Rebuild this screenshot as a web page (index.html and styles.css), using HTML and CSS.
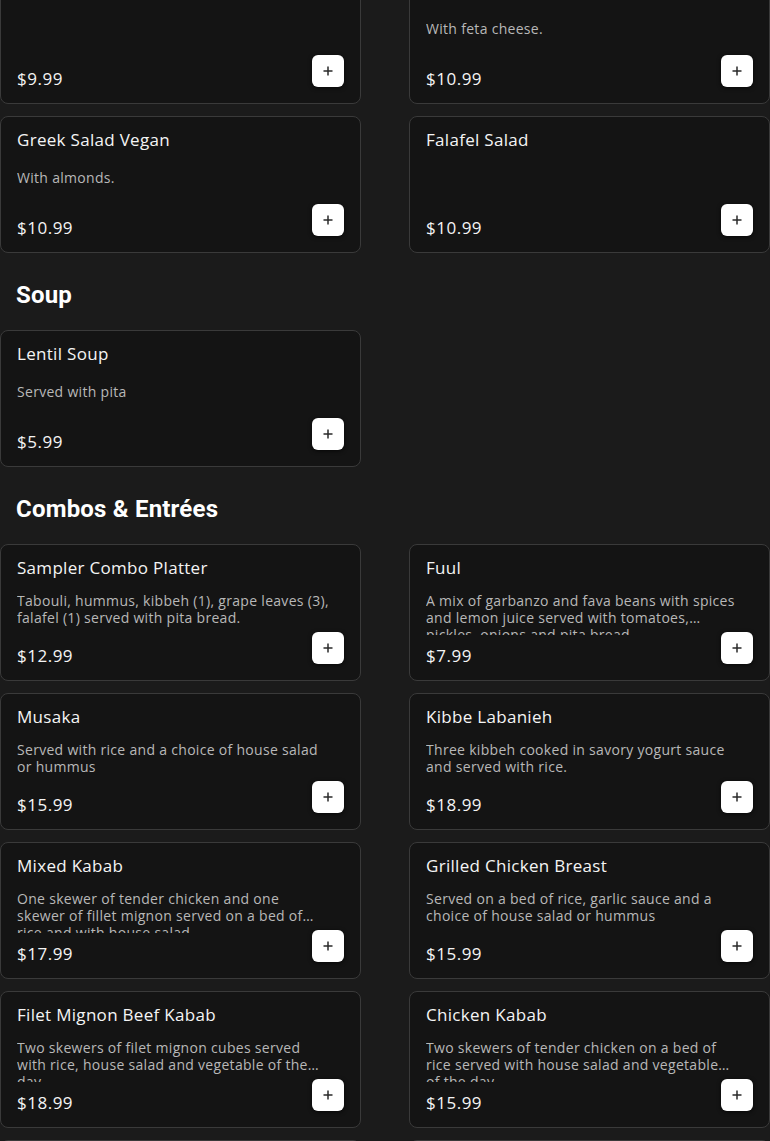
FILE: index.html
```html
<!DOCTYPE html>
<html lang="en">
<head>
<meta charset="utf-8">
<title>Menu</title>
<link rel="stylesheet" href="styles.css">
</head>
<body>
<main class="menu">
  <section class="section section--scrolled">
    <div class="grid">
      <article class="card">
        <h3 class="card-title">House Salad</h3>
        <div class="card-desc"></div>
        <div class="card-foot">
          <span class="card-price">$9.99</span>
          <button class="add-btn" type="button" aria-label="Add"><svg viewBox="0 0 12 12" width="12" height="12"><path d="M6 1.5v9M1.5 6h9"/></svg></button>
        </div>
      </article>
      <article class="card">
        <h3 class="card-title">Greek Salad</h3>
        <p class="card-desc card-desc--short">With feta cheese.</p>
        <div class="card-foot">
          <span class="card-price">$10.99</span>
          <button class="add-btn" type="button" aria-label="Add"><svg viewBox="0 0 12 12" width="12" height="12"><path d="M6 1.5v9M1.5 6h9"/></svg></button>
        </div>
      </article>
      <article class="card">
        <h3 class="card-title">Greek Salad Vegan</h3>
        <p class="card-desc card-desc--short">With almonds.</p>
        <div class="card-foot">
          <span class="card-price">$10.99</span>
          <button class="add-btn" type="button" aria-label="Add"><svg viewBox="0 0 12 12" width="12" height="12"><path d="M6 1.5v9M1.5 6h9"/></svg></button>
        </div>
      </article>
      <article class="card">
        <h3 class="card-title">Falafel Salad</h3>
        <div class="card-desc"></div>
        <div class="card-foot">
          <span class="card-price">$10.99</span>
          <button class="add-btn" type="button" aria-label="Add"><svg viewBox="0 0 12 12" width="12" height="12"><path d="M6 1.5v9M1.5 6h9"/></svg></button>
        </div>
      </article>
    </div>
  </section>

  <section class="section">
    <h2 class="section-title">Soup</h2>
    <div class="grid">
      <article class="card">
        <h3 class="card-title">Lentil Soup</h3>
        <p class="card-desc card-desc--short">Served with pita</p>
        <div class="card-foot">
          <span class="card-price">$5.99</span>
          <button class="add-btn" type="button" aria-label="Add"><svg viewBox="0 0 12 12" width="12" height="12"><path d="M6 1.5v9M1.5 6h9"/></svg></button>
        </div>
      </article>
    </div>
  </section>

  <section class="section">
    <h2 class="section-title">Combos &amp; Entrées</h2>
    <div class="grid">
      <article class="card">
        <h3 class="card-title">Sampler Combo Platter</h3>
        <p class="card-desc">Tabouli, hummus, kibbeh (1), grape leaves (3),<br>falafel (1) served with pita bread.</p>
        <div class="card-foot">
          <span class="card-price">$12.99</span>
          <button class="add-btn" type="button" aria-label="Add"><svg viewBox="0 0 12 12" width="12" height="12"><path d="M6 1.5v9M1.5 6h9"/></svg></button>
        </div>
      </article>
      <article class="card">
        <h3 class="card-title">Fuul</h3>
        <p class="card-desc">A mix of garbanzo and fava beans with spices<br>and lemon juice served with tomatoes,<br>pickles, onions and pita bread.</p>
        <div class="card-foot">
          <span class="card-price">$7.99</span>
          <button class="add-btn" type="button" aria-label="Add"><svg viewBox="0 0 12 12" width="12" height="12"><path d="M6 1.5v9M1.5 6h9"/></svg></button>
        </div>
      </article>
      <article class="card">
        <h3 class="card-title">Musaka</h3>
        <p class="card-desc">Served with rice and a choice of house salad<br>or hummus</p>
        <div class="card-foot">
          <span class="card-price">$15.99</span>
          <button class="add-btn" type="button" aria-label="Add"><svg viewBox="0 0 12 12" width="12" height="12"><path d="M6 1.5v9M1.5 6h9"/></svg></button>
        </div>
      </article>
      <article class="card">
        <h3 class="card-title">Kibbe Labanieh</h3>
        <p class="card-desc">Three kibbeh cooked in savory yogurt sauce<br>and served with rice.</p>
        <div class="card-foot">
          <span class="card-price">$18.99</span>
          <button class="add-btn" type="button" aria-label="Add"><svg viewBox="0 0 12 12" width="12" height="12"><path d="M6 1.5v9M1.5 6h9"/></svg></button>
        </div>
      </article>
      <article class="card">
        <h3 class="card-title">Mixed Kabab</h3>
        <p class="card-desc">One skewer of tender chicken and one<br>skewer of fillet mignon served on a bed of<br>rice and with house salad</p>
        <div class="card-foot">
          <span class="card-price">$17.99</span>
          <button class="add-btn" type="button" aria-label="Add"><svg viewBox="0 0 12 12" width="12" height="12"><path d="M6 1.5v9M1.5 6h9"/></svg></button>
        </div>
      </article>
      <article class="card">
        <h3 class="card-title">Grilled Chicken Breast</h3>
        <p class="card-desc">Served on a bed of rice, garlic sauce and a<br>choice of house salad or hummus</p>
        <div class="card-foot">
          <span class="card-price">$15.99</span>
          <button class="add-btn" type="button" aria-label="Add"><svg viewBox="0 0 12 12" width="12" height="12"><path d="M6 1.5v9M1.5 6h9"/></svg></button>
        </div>
      </article>
      <article class="card">
        <h3 class="card-title">Filet Mignon Beef Kabab</h3>
        <p class="card-desc">Two skewers of filet mignon cubes served<br>with rice, house salad and vegetable of the<br>day</p>
        <div class="card-foot">
          <span class="card-price">$18.99</span>
          <button class="add-btn" type="button" aria-label="Add"><svg viewBox="0 0 12 12" width="12" height="12"><path d="M6 1.5v9M1.5 6h9"/></svg></button>
        </div>
      </article>
      <article class="card">
        <h3 class="card-title">Chicken Kabab</h3>
        <p class="card-desc">Two skewers of tender chicken on a bed of<br>rice served with house salad and vegetable<br>of the day</p>
        <div class="card-foot">
          <span class="card-price">$15.99</span>
          <button class="add-btn" type="button" aria-label="Add"><svg viewBox="0 0 12 12" width="12" height="12"><path d="M6 1.5v9M1.5 6h9"/></svg></button>
        </div>
      </article>
      <article class="card">
        <h3 class="card-title">Shish Tawook</h3>
        <p class="card-desc">Served with rice and house salad</p>
        <div class="card-foot">
          <span class="card-price">$15.99</span>
          <button class="add-btn" type="button" aria-label="Add"><svg viewBox="0 0 12 12" width="12" height="12"><path d="M6 1.5v9M1.5 6h9"/></svg></button>
        </div>
      </article>
      <article class="card">
        <h3 class="card-title">Kafta Kabab</h3>
        <p class="card-desc">Served with rice and house salad</p>
        <div class="card-foot">
          <span class="card-price">$15.99</span>
          <button class="add-btn" type="button" aria-label="Add"><svg viewBox="0 0 12 12" width="12" height="12"><path d="M6 1.5v9M1.5 6h9"/></svg></button>
        </div>
      </article>
    </div>
  </section>
</main>
</body>
</html>
```

FILE: styles.css
```css
html, body {
  margin: 0;
  padding: 0;
  background: #1b1b1b;
}

body {
  font-family: "Open Sans", "Noto Sans", sans-serif;
  color: #f2f2f2;
  overflow: hidden;
}

.menu {
  margin-top: -33px;
}

.section-title {
  margin: 28px 0 21px;
  padding-left: 16px;
  font-family: Roboto, "Liberation Sans", sans-serif;
  font-weight: 700;
  font-size: 24px;
  line-height: 28px;
  letter-spacing: 0.2px;
  color: #ffffff;
}

.grid {
  display: grid;
  grid-template-columns: 1fr 1fr;
  column-gap: 48px;
  row-gap: 12px;
}

.card {
  box-sizing: border-box;
  height: 137px;
  display: flex;
  flex-direction: column;
  padding: 13px 16px 16px;
  border: 1px solid #3a3a3a;
  border-radius: 8px;
  background: #141414;
}

.card-title {
  margin: 0;
  font-size: 17px;
  line-height: 20px;
  font-weight: 400;
  letter-spacing: 0.3px;
  color: #f4f4f4;
  white-space: nowrap;
}

.card-desc {
  flex: 1 1 0;
  min-height: 0;
  margin: 14px 0 0;
  padding-right: 4px;
  font-size: 14px;
  line-height: 17px;
  letter-spacing: 0.3px;
  color: #b8b8b8;
  overflow: hidden;
  display: -webkit-box;
  -webkit-box-orient: vertical;
  -webkit-line-clamp: 2;
}

.card-desc--short {
  margin-top: 19px;
}

.card-foot {
  flex: none;
  height: 32px;
  margin-top: -3px;
  display: flex;
  justify-content: space-between;
  align-items: flex-end;
}

.card-price {
  font-size: 17px;
  line-height: 16px;
  letter-spacing: 0.5px;
  color: #f4f4f4;
}

.add-btn {
  width: 32px;
  height: 32px;
  padding: 0;
  border: none;
  border-radius: 6px;
  background: #ffffff;
  box-shadow: 0 1px 4px rgba(0, 0, 0, 0.7);
  display: flex;
  align-items: center;
  justify-content: center;
  cursor: pointer;
}

.add-btn svg {
  display: block;
  fill: none;
  stroke: #2a2a2a;
  stroke-width: 1.5;
}
```
